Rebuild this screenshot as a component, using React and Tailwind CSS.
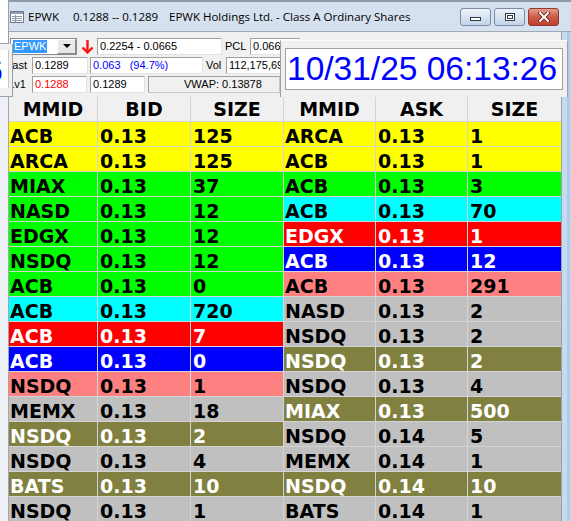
const BIDS = [
  ["ACB", "0.13", "125", "y"],
  ["ARCA", "0.13", "125", "y"],
  ["MIAX", "0.13", "37", "g"],
  ["NASD", "0.13", "12", "g"],
  ["EDGX", "0.13", "12", "g"],
  ["NSDQ", "0.13", "12", "g"],
  ["ACB", "0.13", "0", "g"],
  ["ACB", "0.13", "720", "c"],
  ["ACB", "0.13", "7", "r"],
  ["ACB", "0.13", "0", "b"],
  ["NSDQ", "0.13", "1", "p"],
  ["MEMX", "0.13", "18", "s"],
  ["NSDQ", "0.13", "2", "o"],
  ["NSDQ", "0.13", "4", "s"],
  ["BATS", "0.13", "10", "o"],
  ["NSDQ", "0.13", "1", "s"],
];

const ASKS = [
  ["ARCA", "0.13", "1", "y"],
  ["ACB", "0.13", "1", "y"],
  ["ACB", "0.13", "3", "g"],
  ["ACB", "0.13", "70", "c"],
  ["EDGX", "0.13", "1", "r"],
  ["ACB", "0.13", "12", "b"],
  ["ACB", "0.13", "291", "p"],
  ["NASD", "0.13", "2", "s"],
  ["NSDQ", "0.13", "2", "s"],
  ["NSDQ", "0.13", "2", "o"],
  ["NSDQ", "0.13", "4", "s"],
  ["MIAX", "0.13", "500", "o"],
  ["NSDQ", "0.14", "5", "s"],
  ["MEMX", "0.14", "1", "s"],
  ["NSDQ", "0.14", "10", "o"],
  ["BATS", "0.14", "1", "s"],
];

const TONE = {
  y: "bg-[#ffff00] text-black",
  g: "bg-[#00ff00] text-black",
  c: "bg-[#00ffff] text-black",
  r: "bg-[#ff0000] text-white",
  b: "bg-[#0000ff] text-white",
  p: "bg-[#ff8080] text-black",
  s: "bg-[#c0c0c0] text-black",
  o: "bg-[#808040] text-white",
};

const field =
  "h-[17px] bg-white border border-[#a0a0a0] border-r-[#e3e3e3] border-b-[#e3e3e3] px-[2px] text-[11px] leading-[15px] whitespace-pre overflow-hidden";

function Book({ cols, heads, rows }) {
  return (
    <div className={`grid ${cols} gap-px bg-[#d4d4d4]`}>
      {heads.map((h, i) => (
        <div key={"h" + i} className="h-6 bg-[#f0f0f0] text-center leading-[25px] overflow-hidden">
          {h}
        </div>
      ))}
      {rows.map((r, i) =>
        r.slice(0, 3).map((v, j) => (
          <div
            key={i + "-" + j}
            className={`h-6 overflow-hidden leading-[28px] ${j === 0 ? "pl-px" : "pl-[2px]"} ${TONE[r[3]]}`}
          >
            {v}
          </div>
        ))
      )}
    </div>
  );
}

function CaptionButton({ children, close = false }) {
  return (
    <div
      className={`flex h-[18px] w-[31px] items-center justify-center rounded-[3px] border ${
        close
          ? "border-[#8d3a32] bg-gradient-to-b from-[#e29a8c] via-[#cf5a48] to-[#c0402e]"
          : "border-[#7a8ba5] bg-gradient-to-b from-[#eef3fa] via-[#d8e3f1] to-[#c3d3e8]"
      }`}
    >
      {children}
    </div>
  );
}

export default function App() {
  return (
    <div className="relative h-[521px] w-[571px] overflow-hidden bg-[#f0f0f0] font-['Liberation_Sans',Arial,sans-serif] text-black">
      {/* title bar */}
      <div className="flex h-[31px] items-center border-t-2 border-[#8e9aab] bg-[#d6e1ef] font-['Open_Sans',sans-serif] text-[11.5px] text-black">
        <svg className="ml-[10px]" width="14" height="12" viewBox="0 0 14 12">
          <rect x="0.5" y="0.5" width="13" height="11" fill="#fff" stroke="#6d7a8c" />
          <rect x="1" y="1" width="12" height="2" fill="#8ea0b8" />
          <path d="M2 5.5h10M2 7.5h10M2 9.5h10M5.5 4v7" stroke="#8a96a6" strokeWidth="1" />
        </svg>
        <span className="ml-[4px] w-[45px]">EPWK</span>
        <span className="w-[96px]">0.1288 -- 0.1289</span>
        <span>EPWK Holdings Ltd. - Class A Ordinary Shares</span>
        <div className="ml-auto mr-[12px] flex gap-[3px]">
          <CaptionButton>
            <div className="mt-[5px] h-[4px] w-[11px] border border-[#333a45] bg-white" />
          </CaptionButton>
          <CaptionButton>
            <div className="h-[8px] w-[10px] border border-[#333a45] bg-white p-[1px]">
              <div className="h-full w-full border border-[#333a45]" />
            </div>
          </CaptionButton>
          <CaptionButton close>
            <svg width="12" height="10" viewBox="0 0 12 10">
              <path d="M2 1l8 8M10 1l-8 8" stroke="#5a1a12" strokeWidth="3.4" strokeLinecap="square" />
              <path d="M2 1l8 8M10 1l-8 8" stroke="#fff" strokeWidth="2" strokeLinecap="square" />
            </svg>
          </CaptionButton>
        </div>
      </div>

      <div className="flex border-t border-[#a0a8b4]">
        {/* left frame */}
        <div className="w-[9px] shrink-0 border-r border-[#a6a6a6] bg-[#eef1f5]" />

        <div className="w-[552px] shrink-0">
          {/* quote controls */}
          <div className="flex h-[65px] flex-col gap-[2px] pt-[5px] text-[11px]">
            <div className="flex h-[18px] items-center">
              <div className="ml-px flex h-[17px] w-[67px] items-center border border-[#8a8a8a] bg-white">
                <span className="ml-[2px] bg-[#3399ff] px-px leading-[13px] text-white">EPWK</span>
                <div className="ml-auto flex h-[15px] w-[19px] items-center justify-center border border-[#8a8a8a] border-l-white border-t-white bg-[#e8e8e8]">
                  <div className="h-0 w-0 border-x-[4px] border-t-[4px] border-x-transparent border-t-black" />
                </div>
              </div>
              <svg className="ml-[4px]" width="13" height="15" viewBox="0 0 13 15">
                <path d="M6.5 1v12" stroke="#ff1010" strokeWidth="2.4" />
                <path d="M1.5 8.5l5 5 5-5" stroke="#ff1010" strokeWidth="2.4" fill="none" />
              </svg>
              <div className={`${field} ml-[3px] w-[125px]`}>0.2254 - 0.0665</div>
              <span className="ml-[3px] w-[25px]">PCL</span>
              <div className={`${field} w-[50px]`}>0.0665</div>
            </div>
            <div className="flex h-[17px] items-center">
              <span className="flex w-[22px] shrink-0 justify-end whitespace-nowrap pr-[4px]">
                <span>Last</span>
              </span>
              <div className={`${field} ml-px w-[56px]`}>0.1289</div>
              <div className={`${field} ml-[2px] w-[113px] text-[#0000ff]`}>{"0.063   (94.7%)"}</div>
              <span className="ml-[3px] w-[20px]">Vol</span>
              <div className={`${field} w-[70px]`}>112,175,690</div>
            </div>
            <div className="flex h-[17px] items-center">
              <span className="flex w-[23px] shrink-0 justify-end whitespace-nowrap pr-[6px]">
                <span>Lv1</span>
              </span>
              <div className={`${field} w-[55px] text-[#ff0000]`}>0.1288</div>
              <div className={`${field} ml-[3px] w-[55px]`}>0.1289</div>
              <div className="ml-[3px] h-[17px] w-[132px] border border-[#c8c8c8] border-l-[#a0a0a0] border-t-[#a0a0a0] pl-[35px] leading-[15px]">
                VWAP: 0.13878
              </div>
            </div>
          </div>

          {/* level 2 books */}
          <div className="flex gap-px bg-[#d4d4d4] font-['DejaVu_Sans',Verdana,sans-serif] text-[19px] font-bold">
            <Book cols="grid-cols-[88px_92px_92px]" heads={["MMID", "BID", "SIZE"]} rows={BIDS} />
            <Book cols="grid-cols-[91px_91px_93px]" heads={["MMID", "ASK", "SIZE"]} rows={ASKS} />
          </div>
        </div>

        {/* right frame */}
        <div className="h-[490px] w-[10px] shrink-0 border-l border-[#9aa3ad] bg-[#c7dbef]">
          <div className="ml-[5px] h-full w-[3px] bg-[#aecbea]" />
        </div>
      </div>

      {/* clock window lying over the quote panel */}
      <div className="absolute left-[280px] top-[40px] h-[57px] w-[288px] border border-b-0 border-[#9aa0a8] border-t-[#fafafa] bg-[#f0f0f0] pl-[4px] pt-[7px]">
        <div className="h-[42px] w-[278px] overflow-hidden whitespace-nowrap border border-[#a0a0a0] bg-white pl-px text-[33.5px] leading-[40px] text-[#0000ff]">
          10/31/25 06:13:26
        </div>
      </div>

      {/* edges of other windows at the left */}
      <div className="absolute left-0 top-0 h-[44px] w-[9px] border-b border-r border-[#9aa0a8] bg-white" />
      <div className="absolute left-0 top-[44px] h-[53px] w-[13px] overflow-hidden border-b border-r border-[#9aa0a8] bg-[#f0f0f0]">
        <div className="relative mt-[6px] h-[38px] w-[9px] overflow-hidden border-r border-[#c8c8c8] bg-white">
          <span className="absolute right-[5px] top-0 text-[34px] leading-[40px] text-[#0000ff]">6</span>
        </div>
      </div>
    </div>
  );
}
